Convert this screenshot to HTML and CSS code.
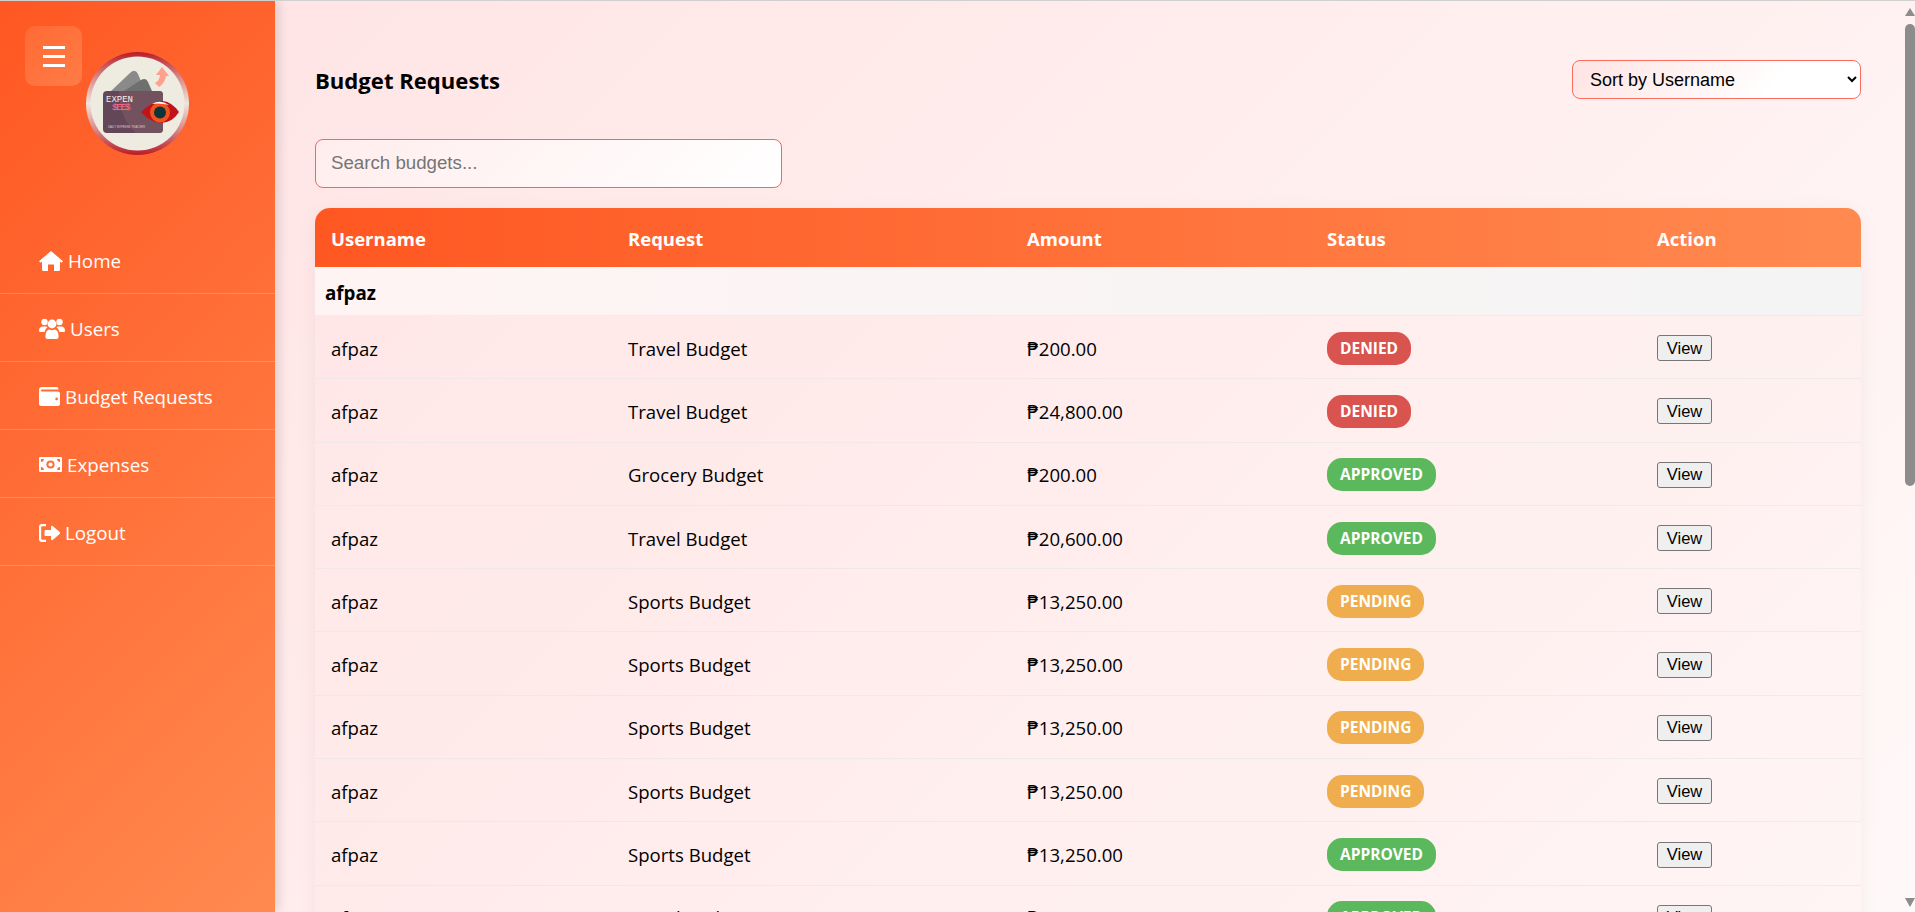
FILE: index.html
```html
<!DOCTYPE html>
<html lang="en">
<head>
<meta charset="utf-8">
<title>Budget Requests</title>
<link rel="stylesheet" href="styles.css">
</head>
<body>
<div class="app">
  <aside class="sidebar">
    <button class="toggle" type="button" aria-label="Menu"><span></span><span></span><span></span></button>
    <svg class="logo" viewBox="0 0 103 103" aria-label="ExpenSees logo">
      <defs>
        <linearGradient id="ring" x1="0" y1="0" x2="0" y2="1">
          <stop offset="0" stop-color="#b81c28"/>
          <stop offset=".25" stop-color="#d98a8a"/>
          <stop offset=".5" stop-color="#f0e4dc"/>
          <stop offset=".75" stop-color="#d98a8a"/>
          <stop offset="1" stop-color="#b81c28"/>
        </linearGradient>
      </defs>
      <circle cx="51.5" cy="51.5" r="51.5" fill="url(#ring)"/>
      <circle cx="51.5" cy="51.5" r="47" fill="#eeebe1"/>
      <path d="M25 39 L44 21 Q49 16 52 22 L59 39 Z" fill="#8a8a8a"/>
      <path d="M38 39 L55 28 Q60 25 62 30 L66 39 Z" fill="#6f6f6f"/>
      <path d="M76 15 L83 24 L80 24 Q79 31 73 35 L69 31 Q74 28 74 23 L70 23 Z" fill="#ff9f8e"/>
      <rect x="17" y="39" width="60" height="42" rx="4" fill="#644659"/>
      <path d="M33 39 H73 Q77 39 77 43 V77 Q77 81 73 81 H50 Q33 66 33 39 Z" fill="#73525f"/>
      <text class="logo-a" x="20" y="49.7">EXPEN</text>
      <text class="logo-b" x="26" y="58">$EE$</text>
      <text class="logo-c" x="22" y="76">DAILY EXPENSE TRACKER</text>
      <path d="M55 60 Q66 49 77 49 Q86 50 93 60 Q86 71 75 71 Q65 71 55 60 Z" fill="#c01418"/>
      <circle cx="74" cy="60.5" r="10" fill="#f0541e"/>
      <circle cx="74" cy="60.5" r="6" fill="#0e3338"/>
      <path d="M66 52 Q74 47 83 53 Q74 50.5 66 52 Z" fill="#fff"/>
    </svg>
    <nav class="menu">
      <a class="menu-link" href="#"><svg class="ico ico-home" viewBox="0 0 24 20"><path d="M12 0 L24 10.2 L22.6 11.8 L21 10.5 V18.5 Q21 20 19.5 20 H15 V13.5 H9 V20 H4.5 Q3 20 3 18.5 V10.5 L1.4 11.8 L0 10.2 Z"/></svg><span>Home</span></a>
      <a class="menu-link" href="#"><svg class="ico ico-users" viewBox="0 0 26 21"><circle cx="5.5" cy="4" r="3.2"/><circle cx="20.5" cy="4" r="3.2"/><circle cx="13" cy="6" r="4.4"/><path d="M0 13 Q0 8.5 4 8.5 H7 Q8 8.5 8.5 9.3 Q6 11 5.6 14 H1 Q0 14 0 13 Z"/><path d="M26 13 Q26 8.5 22 8.5 H19 Q18 8.5 17.5 9.3 Q20 11 20.4 14 H25 Q26 14 26 13 Z"/><path d="M6.5 18 Q6.5 12 10.5 11.5 Q13 12.8 15.5 11.5 Q19.5 12 19.5 18 V19.2 Q19.5 21 17.6 21 H8.4 Q6.5 21 6.5 19.2 Z"/></svg><span>Users</span></a>
      <a class="menu-link" href="#"><svg class="ico ico-wallet" viewBox="0 0 21 19"><path d="M3 0 H18 Q19.5 0 19.5 2.5 H3 Q2 2.5 2 3.5 Q2 4.5 3 4.5 H18.5 Q21 4.5 21 6.5 V16.5 Q21 19 18.5 19 H2.5 Q0 19 0 16.5 V3 Q0 0 3 0 Z M17.6 10.6 A1.3 1.3 0 1 0 17.6 13.2 A1.3 1.3 0 1 0 17.6 10.6 Z" fill-rule="evenodd"/></svg><span>Budget Requests</span></a>
      <a class="menu-link" href="#"><svg class="ico ico-money" viewBox="0 0 23 15"><path d="M1 0 H22 Q23 0 23 1 V14 Q23 15 22 15 H1 Q0 15 0 14 V1 Q0 0 1 0 Z M11.5 3.4 A4.1 4.1 0 1 0 11.5 11.6 A4.1 4.1 0 1 0 11.5 3.4 Z M2 2 V5 Q4.6 5 5 2 Z M18 2 Q18.4 5 21 5 V2 Z M2 10 V13 H5 Q4.6 10 2 10 Z M21 10 Q18.4 10 18 13 H21 Z" fill-rule="evenodd"/><circle cx="11.5" cy="7.5" r="2.1"/></svg><span>Expenses</span></a>
      <a class="menu-link" href="#"><svg class="ico ico-logout" viewBox="0 0 21 18"><path d="M7 0 H3 Q0 0 0 3 V15 Q0 18 3 18 H7 V15.8 H3.4 Q2.2 15.8 2.2 14.6 V3.4 Q2.2 2.2 3.4 2.2 H7 Z"/><path d="M12.5 2 Q13.2 1.5 14 2.2 L20.6 8 Q21.4 9 20.6 10 L14 15.8 Q13.2 16.5 12.5 16 Q12 15.7 12 15 V12 H6.5 Q5.5 12 5.5 11 V7 Q5.5 6 6.5 6 H12 V3 Q12 2.3 12.5 2 Z"/></svg><span>Logout</span></a>
    </nav>
  </aside>

  <main class="content">
    <header class="head">
      <h1 class="title">Budget Requests</h1>
      <select class="sort">
        <option>Sort by Username</option>
        <option>Sort by Amount</option>
        <option>Sort by Status</option>
      </select>
    </header>
    <input class="search" type="text" placeholder="Search budgets...">
    <table class="grid">
      <colgroup>
        <col class="c1"><col class="c2"><col class="c3"><col class="c4"><col class="c5">
      </colgroup>
      <thead>
        <tr><th>Username</th><th>Request</th><th>Amount</th><th>Status</th><th>Action</th></tr>
      </thead>
      <tbody>
        <tr class="group"><td colspan="5">afpaz</td></tr>
        <tr><td>afpaz</td><td>Travel Budget</td><td>₱200.00</td><td><span class="badge denied">Denied</span></td><td><button class="view" type="button">View</button></td></tr>
        <tr><td>afpaz</td><td>Travel Budget</td><td>₱24,800.00</td><td><span class="badge denied">Denied</span></td><td><button class="view" type="button">View</button></td></tr>
        <tr><td>afpaz</td><td>Grocery Budget</td><td>₱200.00</td><td><span class="badge approved">Approved</span></td><td><button class="view" type="button">View</button></td></tr>
        <tr><td>afpaz</td><td>Travel Budget</td><td>₱20,600.00</td><td><span class="badge approved">Approved</span></td><td><button class="view" type="button">View</button></td></tr>
        <tr><td>afpaz</td><td>Sports Budget</td><td>₱13,250.00</td><td><span class="badge pending">Pending</span></td><td><button class="view" type="button">View</button></td></tr>
        <tr><td>afpaz</td><td>Sports Budget</td><td>₱13,250.00</td><td><span class="badge pending">Pending</span></td><td><button class="view" type="button">View</button></td></tr>
        <tr><td>afpaz</td><td>Sports Budget</td><td>₱13,250.00</td><td><span class="badge pending">Pending</span></td><td><button class="view" type="button">View</button></td></tr>
        <tr><td>afpaz</td><td>Sports Budget</td><td>₱13,250.00</td><td><span class="badge pending">Pending</span></td><td><button class="view" type="button">View</button></td></tr>
        <tr><td>afpaz</td><td>Sports Budget</td><td>₱13,250.00</td><td><span class="badge approved">Approved</span></td><td><button class="view" type="button">View</button></td></tr>
        <tr><td>afpaz</td><td>Travel Budget</td><td>₱200.00</td><td><span class="badge approved">Approved</span></td><td><button class="view" type="button">View</button></td></tr>
      </tbody>
    </table>
  </main>

  <div class="scrollbar" aria-hidden="true">
    <span class="arrow-up"></span>
    <span class="thumb"></span>
    <span class="arrow-down"></span>
  </div>
</div>
</body>
</html>
```
FILE: styles.css
```css
* { box-sizing: border-box; }
html, body { margin: 0; height: 100%; overflow: hidden; }
body {
  font-family: "Open Sans", "DejaVu Sans", sans-serif;
  font-size: 18.6px;
  color: #000;
  border-top: 1px solid #d0d0d0;
}
.app {
  display: flex;
  height: 911px;
  overflow: hidden;
  background: linear-gradient(135deg, #ffe3e3 0%, #fff 100%) 0 0 / 100% 1780px no-repeat;
}

/* sidebar */
.sidebar {
  position: relative;
  flex: 0 0 275px;
  background: linear-gradient(135deg, #ff5722 0%, #ff8a50 100%);
  box-shadow: 4px 0 10px rgba(0, 0, 0, .12);
  padding-top: 51px;
}
.toggle {
  position: absolute;
  left: 25px;
  top: 25px;
  width: 57px;
  height: 60px;
  border: 0;
  border-radius: 10px;
  background: linear-gradient(135deg, #ff6a35 0%, #ff7c45 100%);
  display: flex;
  flex-direction: column;
  align-items: center;
  justify-content: center;
  gap: 6px;
  padding: 0;
}
.toggle span { display: block; width: 22px; height: 3px; background: #fff; }
.logo { display: block; width: 103px; height: 103px; margin-left: 86px; }
.logo-a { font: 9px "Liberation Mono", monospace; fill: #f3eef0; letter-spacing: 0; }
.logo-b { font: 9.5px "Liberation Mono", monospace; fill: #ff6f91; letter-spacing: -1.4px; }
.logo-c { font: 2.9px "Liberation Sans", sans-serif; fill: #d9c9cf; }
.menu { margin-top: 71px; }
.menu-link {
  display: flex;
  align-items: center;
  height: 68px;
  padding: 2px 0 0 39px;
  gap: 5px;
  color: #fff;
  text-decoration: none;
  font-size: 18.8px;
  border-bottom: 1px solid rgba(255, 255, 255, .2);
}
.ico { display: block; fill: #fff; flex: none; }
.ico-home { width: 24px; height: 20px; }
.ico-users { width: 26px; height: 21px; }
.ico-wallet { width: 21px; height: 19px; }
.ico-money { width: 23px; height: 15px; }
.ico-logout { width: 21px; height: 18px; }

/* content */
.content { flex: 1 1 auto; min-width: 0; padding: 59px 44px 0 40px; }
.head { display: flex; align-items: center; justify-content: space-between; }
.title { margin: 0; font-size: 22.1px; font-weight: 700; }
.sort {
  width: 289px;
  height: 39px;
  padding: 0 13px;
  font: 18px "Liberation Sans", Arial, sans-serif;
  color: #000;
  border: 1px solid #ff6b5e;
  border-radius: 8px;
  background: linear-gradient(135deg, #ffe3e3 0%, #fff 70%);
}
.search {
  display: block;
  width: 467px;
  height: 49px;
  margin: 40px 0 20px;
  padding: 0 15px 2px;
  font: 18.7px "Liberation Sans", Arial, sans-serif;
  border: 1px solid #f2685c;
  border-radius: 8px;
  background: linear-gradient(135deg, #ffeded 0%, #fff 100%);
  outline: 0;
}
.search::placeholder { color: #757575; }

/* table */
.grid {
  width: 1546px;
  table-layout: fixed;
  border-collapse: separate;
  border-spacing: 0;
  box-shadow: 0 4px 20px rgba(0, 0, 0, .05);
  border-radius: 15px 15px 0 0;
}
.c1 { width: 297px; }
.c2 { width: 399px; }
.c3 { width: 300px; }
.c4 { width: 330px; }
.c5 { width: 220px; }
.grid thead tr { background: linear-gradient(90deg, #ff5722 0%, #ff8a50 100%); }
.grid th {
  height: 59px;
  padding: 2px 16px 0;
  text-align: left;
  font-size: 18.5px;
  font-weight: 700;
  color: #fff;
}
.grid th:first-child { border-top-left-radius: 15px; }
.grid th:last-child { border-top-right-radius: 15px; }
.grid td {
  height: 63.3px;
  padding: 2px 16px 0;
  border-bottom: 1px solid rgba(230, 230, 230, .6);
  background: rgba(255, 225, 225, .15);
}
.grid .group td {
  height: 49px;
  padding: 4px 10px 0;
  font-size: 18.8px;
  font-weight: 700;
  background: linear-gradient(90deg, #fff4f4 0%, #f4f4f4 100%);
}
.badge {
  display: inline-block;
  height: 33px;
  line-height: 33px;
  padding: 0 13px;
  border-radius: 15px;
  color: #fff;
  font-size: 15.5px;
  font-weight: 700;
  text-transform: uppercase;
  vertical-align: middle;
}
.denied { background: #d9534f; }
.approved { background: #5cb85c; }
.pending { background: #f0ad4e; }
.view {
  display: block;
  width: 55px;
  height: 26px;
  padding: 0;
  font: 16.5px "Liberation Sans", Arial, sans-serif;
  color: #000;
  background: #efefef;
  border: 1px solid #767676;
  border-radius: 3px;
}

/* scrollbar */
.scrollbar {
  position: relative;
  flex: 0 0 10px;
  padding-top: 23px;
}
.thumb { display: block; height: 462px; background: #8c8c8c; border-radius: 5px; }
.arrow-up, .arrow-down { position: absolute; left: 0; width: 0; height: 0; border-left: 5px solid transparent; border-right: 5px solid transparent; }
.arrow-up { top: 7px; border-bottom: 8px solid #8c8c8c; }
.arrow-down { top: 897px; border-top: 9px solid #8c8c8c; }
```
